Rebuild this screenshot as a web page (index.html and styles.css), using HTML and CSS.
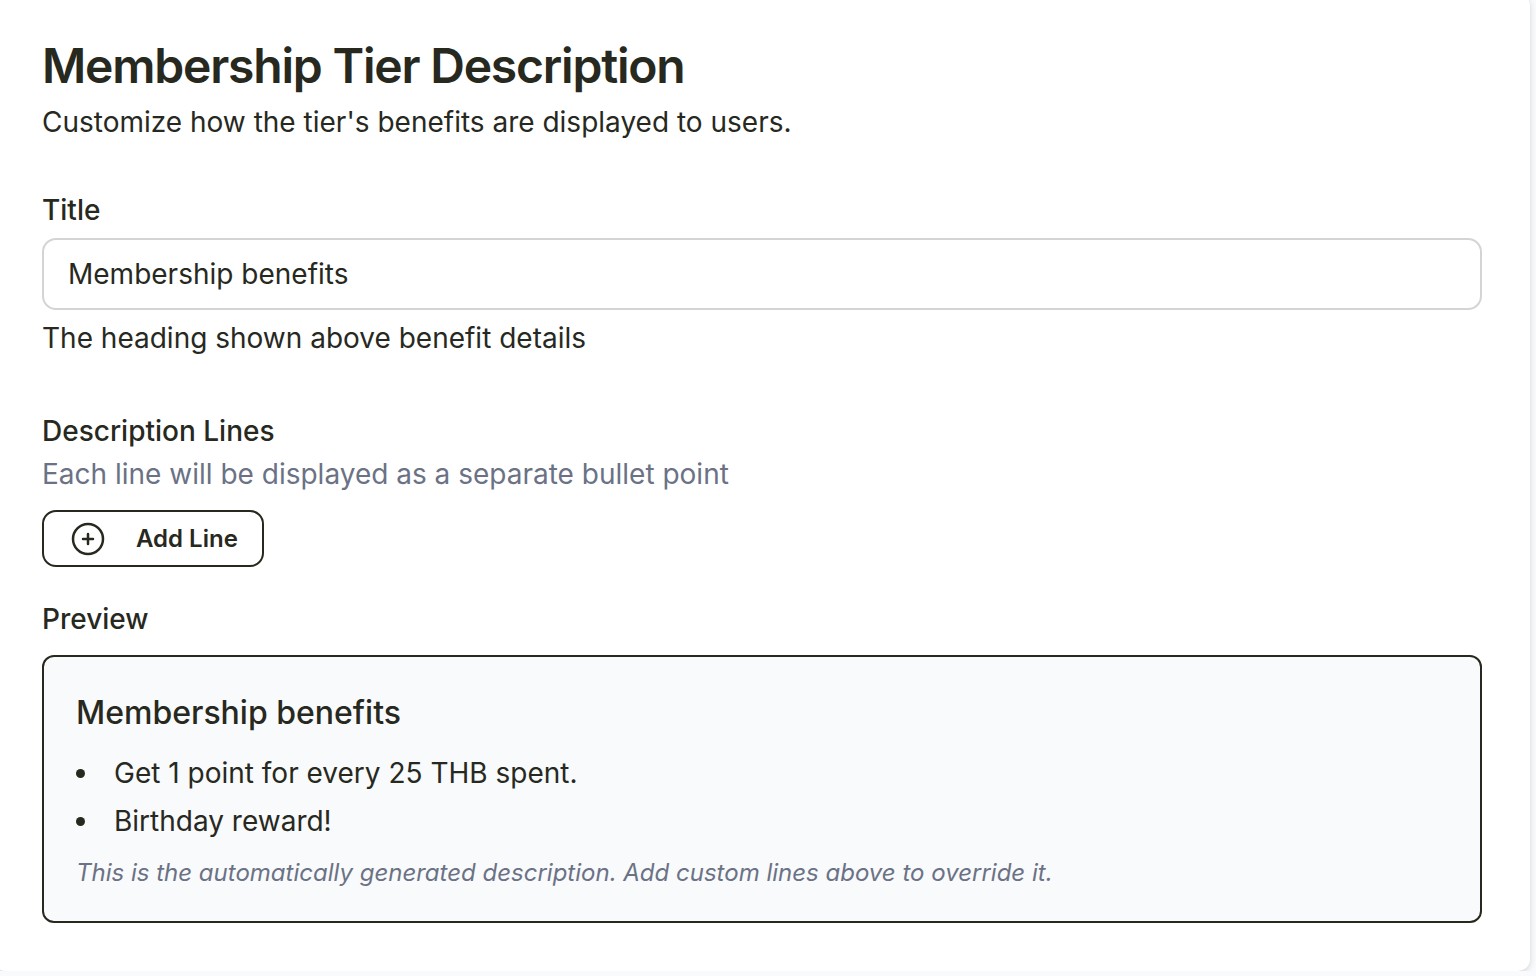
FILE: index.html
```html
<!DOCTYPE html>
<html lang="en">
<head>
    <meta charset="UTF-8">
    <meta name="viewport" content="width=device-width, initial-scale=1.0">
    <title>Membership Tier Description</title>
    <link rel="stylesheet" href="styles.css">
</head>
<body>
    <main class="card">
        <h1>Membership Tier Description</h1>
        <p class="subtitle">Customize how the tier's benefits are displayed to users.</p>

        <div class="field">
            <label for="title">Title</label>
            <input type="text" id="title" value="Membership benefits" aria-describedby="title-help">
            <p id="title-help">The heading shown above benefit details</p>
        </div>

        <section class="lines">
            <h2>Description Lines</h2>
            <p class="hint">Each line will be displayed as a separate bullet point</p>
            <button type="button" class="add-btn">
                <svg class="add-icon" viewBox="0 0 32 32" fill="none" stroke="currentColor" stroke-width="2.5" stroke-linecap="round" aria-hidden="true">
                    <circle cx="16" cy="16" r="15"/>
                    <path d="M16 11v10M11 16h10"/>
                </svg>
                Add Line
            </button>
        </section>

        <section class="preview">
            <h2>Preview</h2>
            <div class="preview-box">
                <h3>Membership benefits</h3>
                <ul>
                    <li>Get 1 point for every 25 THB spent.</li>
                    <li>Birthday reward!</li>
                </ul>
                <p class="note">This is the automatically generated description. Add custom lines above to override it.</p>
            </div>
        </section>
    </main>
</body>
</html>
```
FILE: styles.css
```css
:root {
    --text-color: #27291f;
    --muted-color: #6b7285;
    --border-color: #d4d4d4;
    --background-color: #f9fafb;
    --preview-color: #f9fafc;
}

* {
    box-sizing: border-box;
}

body {
    font-family: Inter, sans-serif;
    font-size: 28px;
    line-height: 40px;
    color: var(--text-color);
    background-color: var(--background-color);
    margin: 0;
    overflow: hidden;
}

h1, h2, h3, p, ul {
    margin: 0;
}

.card {
    margin: -6px 6px 0 -6px;
    padding: 48px;
    background-color: white;
    border-radius: 12px;
    box-shadow: 0 2px 6px rgba(0, 0, 0, 0.15);
}

h1 {
    font-size: 48px;
    font-weight: 600;
    line-height: 48px;
    letter-spacing: -0.025em;
}

h2, label {
    font-size: 28px;
    font-weight: 500;
}

.subtitle {
    margin-top: 12px;
}

.field {
    display: flex;
    flex-direction: column;
    gap: 8px;
    margin-top: 48px;
}

input {
    width: 100%;
    height: 72px;
    padding: 0 24px;
    border: 2px solid var(--border-color);
    border-radius: 14px;
    background-color: white;
    color: inherit;
    font: inherit;
}

.lines {
    margin-top: 53px;
}

.hint {
    margin-top: 3px;
    color: var(--muted-color);
}

.add-btn {
    display: flex;
    align-items: center;
    gap: 32px;
    height: 57px;
    margin-top: 16px;
    padding: 0 24px 0 28px;
    border: 2px solid var(--text-color);
    border-radius: 14px;
    background-color: white;
    color: inherit;
    font-family: inherit;
    font-size: 24px;
    font-weight: 600;
    cursor: pointer;
}

.add-icon {
    width: 32px;
    height: 32px;
    overflow: visible;
}

.preview {
    margin-top: 32px;
}

.preview-box {
    margin-top: 16px;
    padding: 32px;
    border: 2px solid var(--text-color);
    border-radius: 12px;
    background-color: var(--preview-color);
}

h3 {
    font-size: 32px;
    font-weight: 500;
    line-height: 48px;
}

ul {
    display: flex;
    flex-direction: column;
    gap: 8px;
    margin-top: 16px;
    padding: 0;
    list-style-position: inside;
}

.note {
    margin-top: 16px;
    font-size: 24px;
    font-style: oblique 14deg;
    line-height: 32px;
    color: var(--muted-color);
}
```
